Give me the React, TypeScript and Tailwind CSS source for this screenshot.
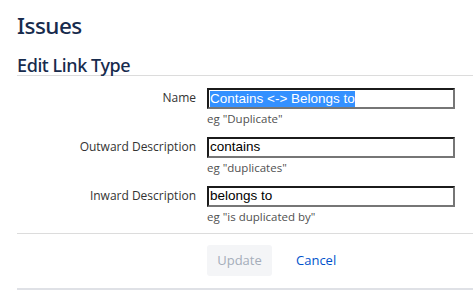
import React from 'react';

const fields = [
  { label: 'Name', value: 'Contains <-> Belongs to', hint: 'eg "Duplicate"', selected: true },
  { label: 'Outward Description', value: 'contains', hint: 'eg "duplicates"' },
  { label: 'Inward Description', value: 'belongs to', hint: 'eg "is duplicated by"' },
];

export default function App() {
  return (
    <div className="min-h-screen bg-white pl-[17px] font-['Open_Sans',sans-serif] text-[#172b4d]">
      <h1 className="pt-[11px] font-['Noto_Sans',sans-serif] text-[22.5px] leading-[30px] font-medium tracking-[-0.5px]">Issues</h1>
      <h2 className="mt-[16px] border-b border-[#dcdcdc] pb-[1px] font-['Noto_Sans',sans-serif] text-[18px] leading-[17px] font-medium tracking-[-0.4px]">Edit Link Type</h2>

      <form className="mt-[12px] flex flex-col gap-[11px]">
        {fields.map((f) => (
          <div key={f.label} className="flex">
            <label className="w-[190px] pr-[11px] pt-[2px] text-right text-[12px] leading-[16px] text-[#333]">{f.label}</label>
            <div className="flex flex-col">
              <div className="flex h-[21px] w-[248px] items-center border-2 border-t-[#1b1b1b] border-l-[#1b1b1b] border-r-[#767676] border-b-[#767676] px-[1px] font-['Liberation_Sans',sans-serif] text-[13.5px] text-black">
                {f.selected ? <span className="bg-[#3390ff] leading-[16px] text-white">{f.value}</span> : <span>{f.value}</span>}
              </div>
              <span className="mt-[2px] text-[11.5px] leading-[15px] text-[#505050]">{f.hint}</span>
            </div>
          </div>
        ))}
      </form>

      <div className="mt-[9px] flex items-center border-t border-[#dcdcdc] pt-[11px] pb-[12px] pl-[190px]">
        <button type="button" disabled className="h-[31px] w-[65px] rounded-[3px] bg-[#f4f5f7] text-[13px] text-[#a5adba]">Update</button>
        <a className="ml-[24px] text-[13px] text-[#0052cc]">Cancel</a>
      </div>
      <div className="border-t-2 border-[#dfe1e6]" />
    </div>
  );
}
